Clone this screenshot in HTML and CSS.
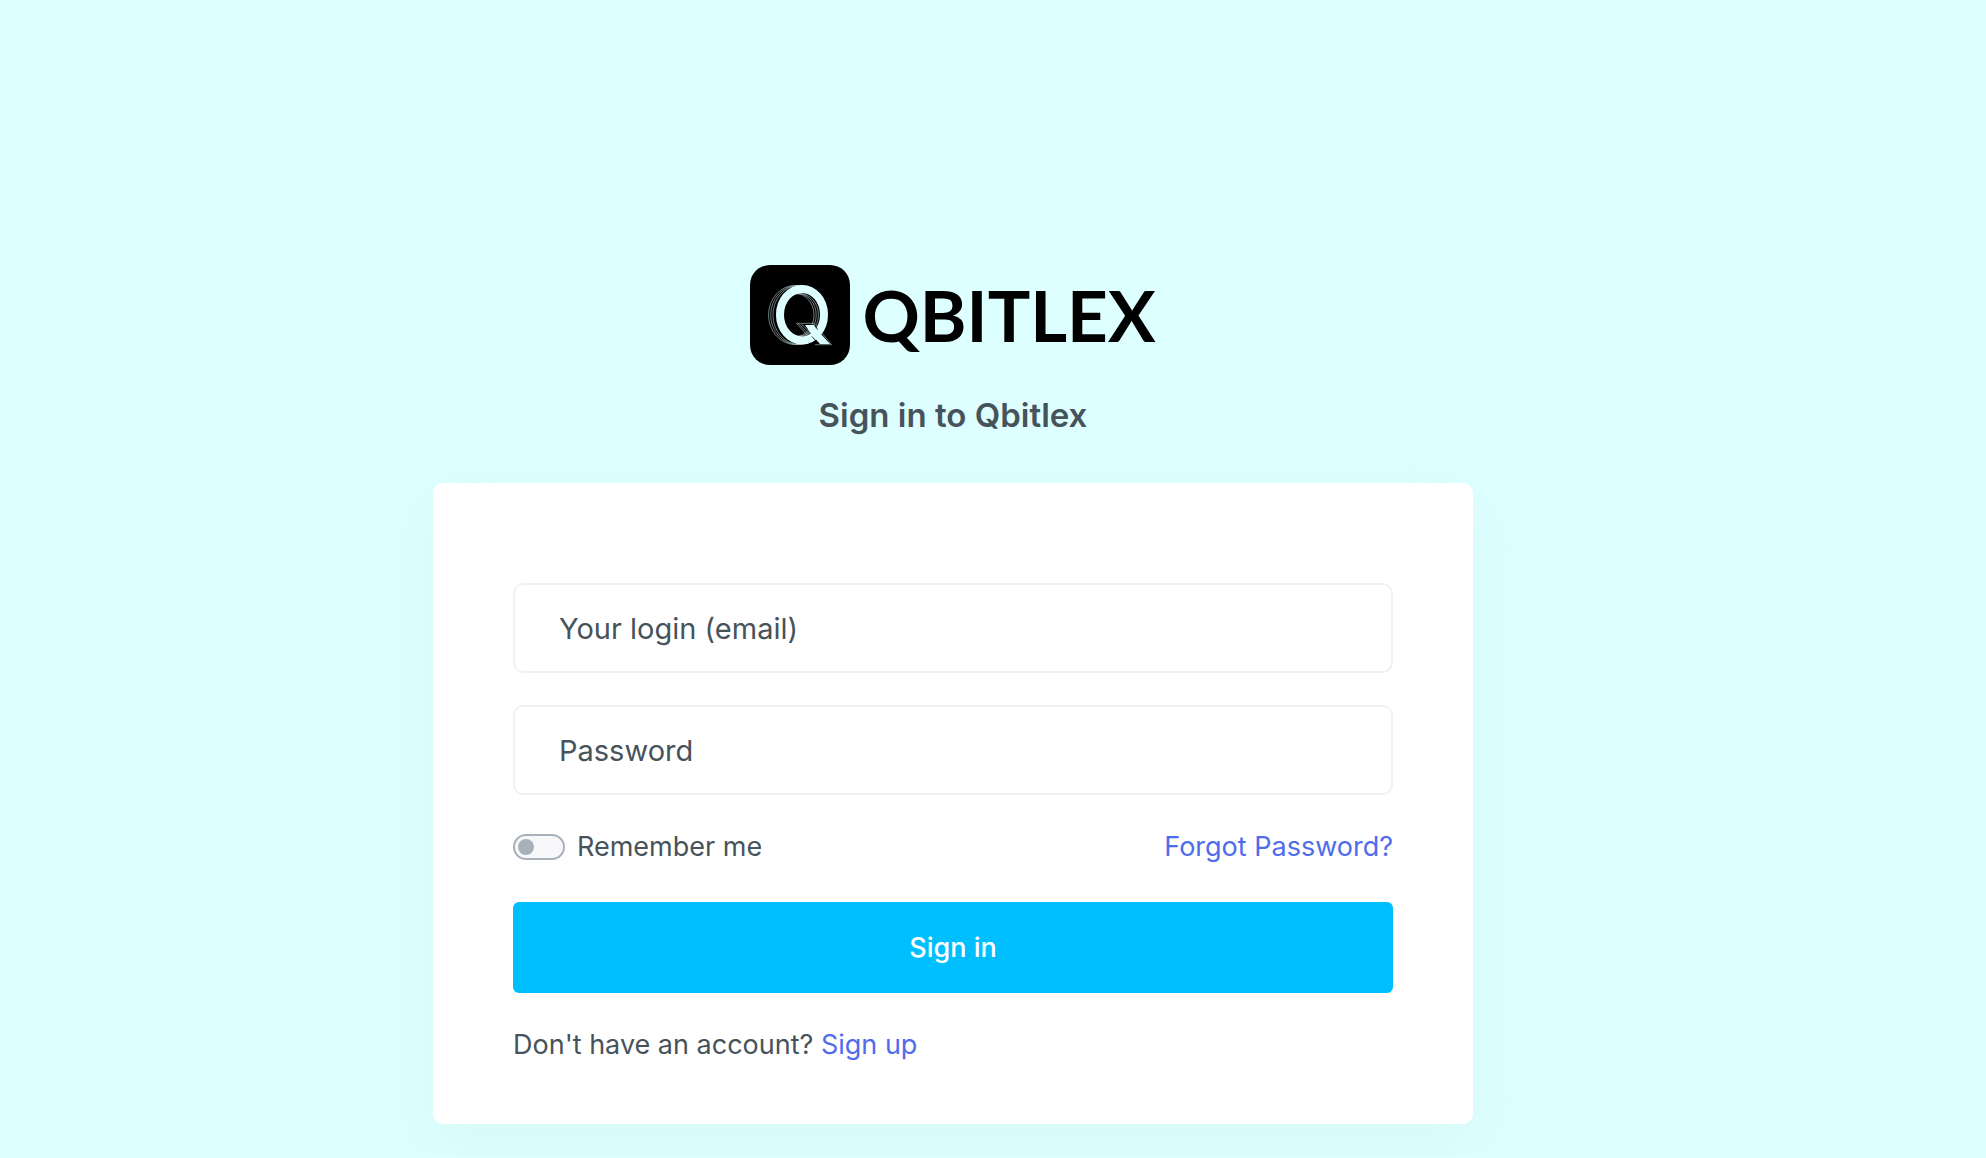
FILE: index.html
```html
<!DOCTYPE html>
<html lang="en">
<head>
    <meta charset="UTF-8">
    <meta name="viewport" content="width=device-width, initial-scale=1.0">
    <title>Sign in to Qbitlex</title>
    <link rel="stylesheet" href="styles.css">
</head>
<body>
    <main class="page">
        <div class="logo">
            <svg class="logo-icon" viewBox="0 0 100 100" aria-hidden="true">
                <rect width="100" height="100" rx="20" fill="#000"/>
                <!-- thin echoes behind the mark -->
                <g fill="none" stroke="#b4cccc" stroke-width="0.6">
                    <g id="echo">
                        <ellipse cx="45" cy="50" rx="26.500" ry="29.500"/>
                        <ellipse cx="45.500" cy="50" rx="18.500" ry="21.500"/>
                    </g>
                    <use href="#echo" x="2.200"/>
                    <use href="#echo" x="4.400"/>
                    <path d="M46.500 58.300H64M46.500 58.300L57 70M49 59L59 69.500M51.500 59L61 68.500"/>
                    <path d="M64 58.300L81.500 79.700H65"/>
                </g>
                <ellipse cx="52" cy="49.700" rx="22" ry="25.800" fill="none" stroke="#deffff" stroke-width="8"/>
                <path d="M55 60H64L66.500 64L80 79H70L62 70Z" fill="#deffff"/>
                <path d="M65 60L67.500 64.500M62 71.500L69 79.500" stroke="#000" stroke-width="0.8"/>
            </svg>
            <span class="logo-text">QBITLEX</span>
        </div>
        <h1>Sign in to Qbitlex</h1>
        <form class="card">
            <input class="field" type="email" placeholder="Your login (email)" aria-label="Your login (email)">
            <input class="field" type="password" placeholder="Password" aria-label="Password">
            <div class="options">
                <label class="remember" for="remember">
                    <input type="checkbox" id="remember">
                    Remember me
                </label>
                <a href="#">Forgot Password?</a>
            </div>
            <button type="submit">Sign in</button>
            <p class="signup">Don't have an account? <a href="#">Sign up</a></p>
        </form>
    </main>
</body>
</html>
```
FILE: styles.css
```css
* {
    box-sizing: border-box;
}

body {
    margin: 0;
    background-color: #deffff;
    color: #47535b;
    font-family: Inter, "Open Sans", sans-serif;
    font-size: 27px;
    line-height: 40px;
}

.page {
    display: flex;
    flex-direction: column;
    align-items: center;
    padding: 265px 80px 32px 0;
}

/* Logo */
.logo {
    display: flex;
    align-items: center;
    gap: 12px;
}

.logo-icon {
    width: 100px;
    height: 100px;
}

.logo-text {
    color: #000;
    font-family: Lato, Inter, sans-serif;
    font-size: 71px;
    font-weight: 700;
    line-height: 100px;
}

h1 {
    margin: 26px 0 44px;
    font-size: 33px;
    font-weight: 600;
    line-height: 48px;
}

/* Form */
.card {
    width: 100%;
    max-width: 1040px;
    padding: 100px 80px 59px;
    background-color: #fff;
    border-radius: 10px;
    box-shadow: 0 20px 60px rgba(170, 210, 190, 0.14);
}

.field {
    display: block;
    width: 100%;
    height: 90px;
    margin-bottom: 32px;
    padding: 0 44px;
    border: 2px solid #f1f1f1;
    border-radius: 10px;
    background-color: #fff;
    color: #47535b;
    font-family: inherit;
    font-size: 29px;
}

.field::placeholder {
    color: #47535b;
    opacity: 1;
}

.options {
    display: flex;
    justify-content: space-between;
    align-items: center;
    margin-bottom: 35px;
}

.remember {
    display: flex;
    align-items: center;
    gap: 12px;
}

.remember input {
    appearance: none;
    width: 52px;
    height: 26px;
    margin: 0;
    padding: 3px;
    border: 2px solid #a8b1ba;
    border-radius: 13px;
    background-color: #f8f8fb;
    cursor: pointer;
}

.remember input::before {
    content: "";
    display: block;
    width: 16px;
    height: 16px;
    border-radius: 50%;
    background-color: #a8b1ba;
}

.remember input:checked::before {
    margin-left: auto;
}

a {
    color: #4f6ced;
    text-decoration: none;
}

button {
    display: block;
    width: 100%;
    height: 91px;
    border: none;
    border-radius: 6px;
    background-color: #00bfff;
    color: #fff;
    font-family: inherit;
    font-size: 27px;
    font-weight: 500;
    cursor: pointer;
}

.signup {
    margin: 32px 0 0;
}
```
